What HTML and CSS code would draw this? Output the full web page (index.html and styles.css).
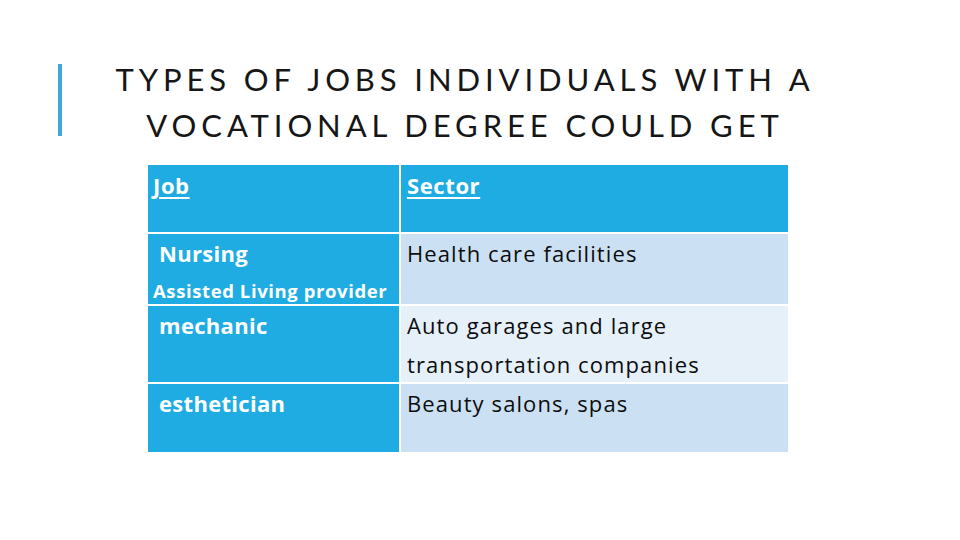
FILE: index.html
```html
<!DOCTYPE html>
<html>
<head>
<meta charset="utf-8">
<link rel="stylesheet" href="styles.css">
</head>
<body>
<div class="slide">
  <div class="title-row">
    <div class="accent"></div>
    <h1 class="title">TYPES OF JOBS INDIVIDUALS WITH A<br>VOCATIONAL DEGREE COULD GET</h1>
  </div>
  <div class="table">
    <div class="cell head"><span class="u">Job</span></div>
    <div class="cell head sec"><span class="u">Sector</span></div>
    <div class="cell job"><span class="ind">Nursing</span><span class="small">Assisted Living provider</span></div>
    <div class="cell val dark">Health care facilities</div>
    <div class="cell job"><span class="ind">mechanic</span></div>
    <div class="cell val light">Auto garages and large<br>transportation companies</div>
    <div class="cell job"><span class="ind">esthetician</span></div>
    <div class="cell val dark">Beauty salons, spas</div>
  </div>
</div>
</body>
</html>
```
FILE: styles.css
```css
html, body {
  margin: 0;
  padding: 0;
  background: #ffffff;
}
.slide {
  width: 960px;
  height: 540px;
  font-family: Lato, "Open Sans", sans-serif;
  font-variant-ligatures: none;
  overflow: hidden;
}
.title-row {
  display: flex;
  padding-top: 64px;
  height: 100px;
}
.accent {
  width: 4px;
  height: 72px;
  margin-left: 58px;
  background: #3fa8d5;
  flex: none;
}
.title {
  margin: -8px 0 0 53px;
  width: 700px;
  text-align: center;
  font-weight: 400;
  font-size: 31px;
  line-height: 46px;
  letter-spacing: 4.9px;
  color: #161616;
}
.table {
  display: grid;
  grid-template-columns: 251px 387px;
  grid-template-rows: 67px 70px 76px 68px;
  column-gap: 2px;
  row-gap: 2px;
  margin: 1px 0 0 148px;
  width: 640px;
  font-family: "Open Sans", Lato, sans-serif;
}
.cell {
  font-size: 22px;
  line-height: 39px;
  box-sizing: border-box;
  padding-left: 5px;
}
.head {
  background: #1eace3;
  color: #ffffff;
  font-weight: 700;
  letter-spacing: 0.6px;
  padding-top: 1px;
}
.sec {
  padding-left: 6px;
}
.u {
  text-decoration: underline;
  text-decoration-thickness: 2px;
  text-underline-offset: 3px;
}
.job {
  background: #1eace3;
  color: #ffffff;
  font-weight: 700;
  letter-spacing: 0.3px;
}
.ind {
  display: block;
  padding-left: 6px;
}
.small {
  display: block;
  font-size: 18.5px;
  line-height: 27px;
  padding-top: 4px;
  letter-spacing: 0.6px;
}
.val {
  color: #0d0d0d;
  padding-left: 6px;
  letter-spacing: 1.1px;
}
.dark {
  background: #cbe1f3;
}
.light {
  background: #e5f0f9;
}
```
